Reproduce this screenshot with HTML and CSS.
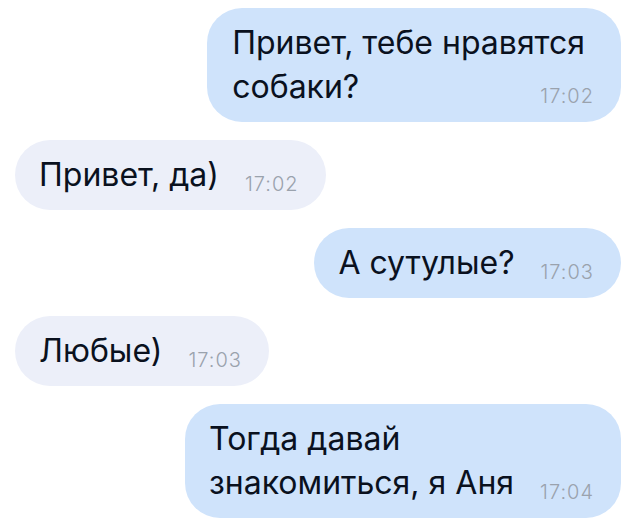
FILE: index.html
```html
<!DOCTYPE html>
<html>

<head>
    <meta charset="UTF-8">
    <title>Чат</title>
    <link rel="stylesheet" href="styles.css">
</head>

<body>
    <!-- Переписка -->
    <div class="chat">
        <div class="msg out">
            <div class="bubble wide">Привет, тебе нравятся<br>собаки?<span class="time">17:02</span></div>
        </div>
        <div class="msg in">
            <div class="bubble">Привет, да)<span class="time">17:02</span></div>
        </div>
        <div class="msg out">
            <div class="bubble">А сутулые?<span class="time">17:03</span></div>
        </div>
        <div class="msg in">
            <div class="bubble">Любые)<span class="time">17:03</span></div>
        </div>
        <div class="msg out">
            <div class="bubble">Тогда давай<br>знакомиться, я Аня<span class="time">17:04</span></div>
        </div>
    </div>
</body>

</html>
```
FILE: styles.css
```css
* {
    box-sizing: border-box;
}

body {
    margin: 0;
    background-color: #ffffff;
    font-family: Inter, "Noto Sans", sans-serif;
    color: #0a111e;
}

.chat {
    display: flex;
    flex-direction: column;
    gap: 18px;
    padding: 8px 7px 0 15px;
}

.msg {
    display: flex;
}

.msg.out {
    justify-content: flex-end;
}

.msg.in {
    justify-content: flex-start;
}

.bubble {
    padding: 13px 27px 13px 24px;
    border-radius: 35px;
    font-size: 32px;
    line-height: 44px;
    white-space: nowrap;
}

.bubble.wide {
    padding-left: 25px;
    padding-right: 36px;
}

.msg.out .bubble {
    background-color: #cfe3fb;
}

.msg.in .bubble {
    background-color: #eceff9;
}

.time {
    float: right;
    margin-top: 19px;
    margin-left: 26px;
    font-size: 20px;
    font-weight: 300;
    line-height: 24px;
    letter-spacing: 1px;
    color: #9aa2ad;
}

.bubble.wide .time {
    margin-right: -9px;
}
```
